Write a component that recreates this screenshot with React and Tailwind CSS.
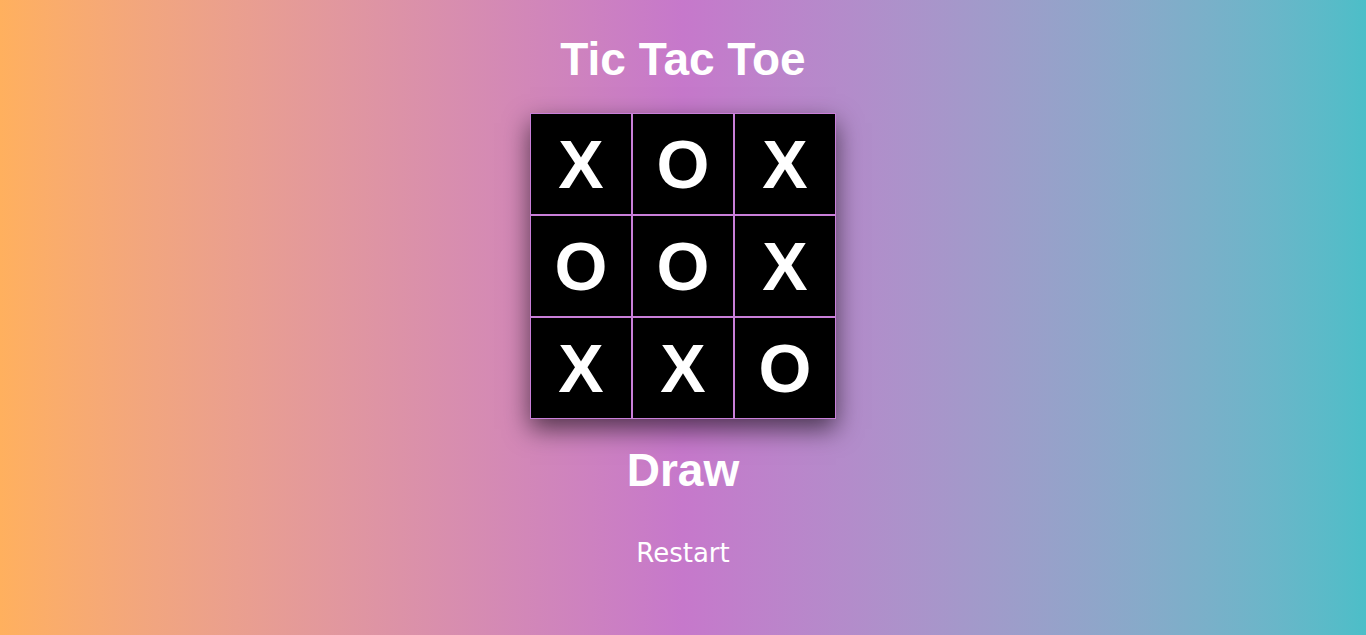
export default function App() {
  const cells = ["X", "O", "X", "O", "O", "X", "X", "X", "O"];

  return (
    <div
      className="min-h-screen w-full flex flex-col items-center bg-gradient-to-r from-[#ffb05e] via-[#c678cb] to-[#4cbec8] text-white"
      style={{ fontFamily: '"Liberation Sans", Arial, sans-serif' }}
    >
      {/* Title */}
      <h1 className="mt-[33px] text-[46px] leading-[52px] font-bold">Tic Tac Toe</h1>

      {/* Board */}
      <div className="mt-[28px] grid grid-cols-3 bg-black shadow-[0_10px_24px_rgba(0,0,0,0.6)]">
        {cells.map((c, i) => (
          <div
            key={i}
            className="w-[102px] h-[102px] border border-[#c97fd9] flex items-center justify-center text-[68px] font-bold leading-none"
          >
            {c}
          </div>
        ))}
      </div>

      {/* Status */}
      <h2 className="mt-[25px] text-[46px] leading-[52px] font-bold">Draw</h2>

      <button
        className="mt-[42px] bg-transparent text-[26px] leading-[30px] text-white"
        style={{ fontFamily: '"DejaVu Sans", Verdana, sans-serif' }}
      >
        Restart
      </button>
    </div>
  );
}
